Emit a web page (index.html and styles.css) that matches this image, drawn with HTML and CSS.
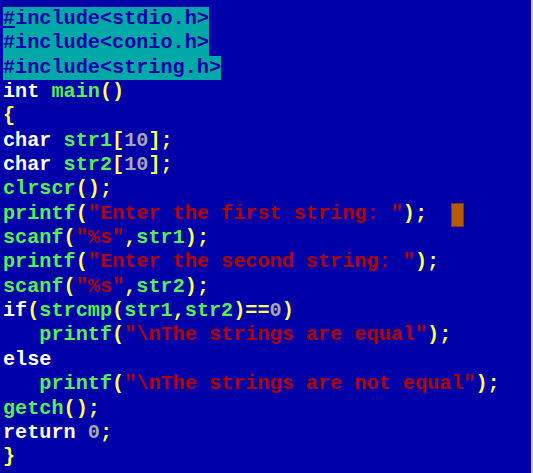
FILE: index.html
```html
<!DOCTYPE html>
<html>
<head>
<meta charset="utf-8">
<link rel="stylesheet" href="styles.css">
</head>
<body>
<div class="screen">
<div class="code">
<div class="ln"><span class="hl"><span class="cur">#</span>include&lt;stdio.h&gt;</span></div>
<div class="ln"><span class="hl">#include&lt;conio.h&gt;</span></div>
<div class="ln"><span class="hl">#include&lt;string.h&gt;</span></div>
<div class="ln"><span class="k">int</span> <span class="i">main</span><span class="p">()</span></div>
<div class="ln"><span class="p">{</span></div>
<div class="ln"><span class="k">char</span> <span class="i">str1</span><span class="p">[</span><span class="n">10</span><span class="p">];</span></div>
<div class="ln"><span class="k">char</span> <span class="i">str2</span><span class="p">[</span><span class="n">10</span><span class="p">];</span></div>
<div class="ln"><span class="i">clrscr</span><span class="p">();</span></div>
<div class="ln"><span class="i">printf</span><span class="p">(</span><span class="s">"Enter the first string: "</span><span class="p">);</span>  <span class="caret"></span></div>
<div class="ln"><span class="i">scanf</span><span class="p">(</span><span class="s">"%s"</span><span class="p">,</span><span class="i">str1</span><span class="p">);</span></div>
<div class="ln"><span class="i">printf</span><span class="p">(</span><span class="s">"Enter the second string: "</span><span class="p">);</span></div>
<div class="ln"><span class="i">scanf</span><span class="p">(</span><span class="s">"%s"</span><span class="p">,</span><span class="i">str2</span><span class="p">);</span></div>
<div class="ln"><span class="k">if</span><span class="p">(</span><span class="i">strcmp</span><span class="p">(</span><span class="i">str1</span><span class="p">,</span><span class="i">str2</span><span class="p">)==</span><span class="n">0</span><span class="p">)</span></div>
<div class="ln">   <span class="i">printf</span><span class="p">(</span><span class="s">"\nThe strings are equal"</span><span class="p">);</span></div>
<div class="ln"><span class="k">else</span></div>
<div class="ln">   <span class="i">printf</span><span class="p">(</span><span class="s">"\nThe strings are not equal"</span><span class="p">);</span></div>
<div class="ln"><span class="i">getch</span><span class="p">();</span></div>
<div class="ln"><span class="k">return</span> <span class="n">0</span><span class="p">;</span></div>
<div class="ln"><span class="p">}</span></div>
</div>
</div>
</body>
</html>
```
FILE: styles.css
```css
html, body {
  margin: 0;
  padding: 0;
  background: #0000a8;
}
.screen {
  width: 531px;
  height: 473px;
  background: #0000a8;
  border-right: 2px solid #c8c8e0;
  overflow: hidden;
}
.code {
  padding: 7px 0 0 3px;
  font-family: "Liberation Mono", "DejaVu Sans Mono", monospace;
  font-weight: bold;
  font-size: 20.2px;
  color: #ffffff;
}
.ln {
  height: 24.35px;
  line-height: 24.35px;
  white-space: pre;
}
.hl {
  display: inline-block;
  vertical-align: top;
  background: #00a8a8;
  color: #0000a8;
  height: 24.35px;
}
.cur {
  text-decoration: underline;
  text-decoration-thickness: 2px;
  text-underline-offset: 2px;
}
.k { color: #ffffff; }
.i { color: #55f055; }
.p { color: #ffff55; }
.s { color: #b00000; }
.n { color: #a8a8a8; }
.caret {
  display: inline-block;
  vertical-align: top;
  margin-top: 1px;
  width: 13px;
  height: 24px;
  background: #b85c00;
  border: 1px solid #7a3c00;
  box-sizing: border-box;
}
```
